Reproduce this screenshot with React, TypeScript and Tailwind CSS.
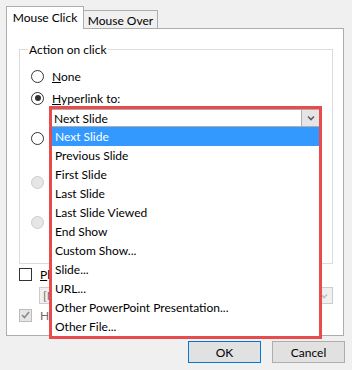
import React from "react";

const items = [
  "Next Slide",
  "Previous Slide",
  "First Slide",
  "Last Slide",
  "Last Slide Viewed",
  "End Show",
  "Custom Show...",
  "Slide...",
  "URL...",
  "Other PowerPoint Presentation...",
  "Other File...",
];

function Radio({ checked, disabled }: { checked?: boolean; disabled?: boolean }) {
  return (
    <span
      className={`flex h-[13px] w-[13px] shrink-0 items-center justify-center rounded-full border ${
        disabled ? "border-[#cccccc] bg-[#e6e6e6]" : "border-[#333333] bg-white"
      }`}
    >
      {checked && <span className="h-[6px] w-[6px] rounded-full bg-[#333333]" />}
    </span>
  );
}

function Chevron({ color = "#606060" }: { color?: string }) {
  return (
    <svg width="8" height="6" viewBox="0 0 8 6" fill="none">
      <path d="M1 1.5 L4 4.5 L7 1.5" stroke={color} strokeWidth="1.6" />
    </svg>
  );
}

export default function App() {
  return (
    <div className="relative h-[370px] w-[352px] overflow-hidden bg-[#f0f0f0] font-['Segoe_UI','Lato',sans-serif] text-[12px] leading-[15px] text-black">
      {/* tabs */}
      <div className="flex h-[28px] items-end pl-[6px]">
        <div className="relative z-10 -mb-px flex h-[23px] w-[78px] items-start justify-center border border-b-0 border-[#adadad] bg-white pt-[3px]">
          Mouse Click
        </div>
        <div className="flex h-[18px] w-[74px] items-start justify-center border border-b-0 border-l-0 border-[#adadad] bg-[#f0f0f0] pt-[2px]">
          Mouse Over
        </div>
      </div>

      {/* panel */}
      <div className="ml-[6px] h-[308px] w-[338px] border border-[#adadad] bg-white">
        <div className="ml-[12px] mt-[20px] h-[215px] w-[314px] border border-[#dcdcdc]">
          <div className="-mt-[8px] ml-[8px] w-fit bg-white px-px">Action on click</div>
          <div className="mt-[11px] flex h-[16px] items-center gap-[8px] pl-[11px]">
            <Radio />
            <span>
              <span className="underline">N</span>one
            </span>
          </div>
          <div className="mt-[6px] flex h-[16px] items-center gap-[8px] pl-[11px]">
            <Radio checked />
            <span>
              <span className="underline">H</span>yperlink to:
            </span>
          </div>
          <div className="mt-[24px] flex h-[16px] items-center pl-[11px]">
            <Radio />
          </div>
          <div className="mt-[28px] flex h-[16px] items-center pl-[11px]">
            <Radio disabled />
          </div>
          <div className="mt-[24px] flex h-[16px] items-center pl-[11px]">
            <Radio disabled />
          </div>
        </div>

        {/* these rows run under the open list */}
        <div className="ml-[12px] mt-[4px] flex h-[13px] items-center gap-[8px]">
          <span className="h-[13px] w-[13px] shrink-0 border border-[#333333] bg-white" />
          <span className="whitespace-nowrap">
            <span className="underline">P</span>lay sound:
          </span>
        </div>
        <div className="ml-[32px] mt-[6px] flex h-[17px] w-[294px] items-center border border-[#cccccc] bg-[#f0f0f0] pl-[3px] text-[#6d6d6d]">
          <span className="flex-1 whitespace-nowrap">[No Sound]</span>
          <span className="flex h-full w-[16px] items-center justify-center">
            <Chevron color="#bfbfbf" />
          </span>
        </div>
        <div className="ml-[12px] mt-[4px] flex h-[14px] items-center gap-[8px] text-[#6d6d6d]">
          <span className="flex h-[13px] w-[13px] shrink-0 items-center justify-center border border-[#bcbcbc] bg-[#e6e6e6]">
            <svg width="9" height="8" viewBox="0 0 9 8" fill="none">
              <path d="M1 4 L3.5 6.5 L8 1" stroke="#8a8a8a" strokeWidth="1.6" />
            </svg>
          </span>
          <span className="whitespace-nowrap">Highlight click</span>
        </div>
      </div>

      {/* buttons */}
      <div className="mt-[5px] flex justify-end gap-[11px] pr-[7px]">
        <button className="h-[22px] w-[73px] border border-[#0078d7] bg-[#e1e1e1]">OK</button>
        <button className="h-[22px] w-[73px] border border-[#adadad] bg-[#e1e1e1]">Cancel</button>
      </div>

      {/* open dropdown, outlined in red */}
      <div className="absolute left-[49px] top-[106px] z-20 w-[273px] border-[3px] border-[#e84b4b] bg-white">
        <div className="flex h-[18px] items-stretch border-y border-[#adadad] bg-white">
          <span className="flex flex-1 items-center pl-[2px]">Next Slide</span>
          <span className="flex w-[18px] items-center justify-center border-l border-[#adadad] bg-[#e5e5e5]">
            <Chevron />
          </span>
        </div>
        <ul>
          {items.map((item, i) => (
            <li
              key={item}
              className={`flex h-[19px] items-center pl-[3px] ${i === 0 ? "bg-[#3399ff] text-white" : ""}`}
            >
              {item}
            </li>
          ))}
        </ul>
      </div>
    </div>
  );
}
